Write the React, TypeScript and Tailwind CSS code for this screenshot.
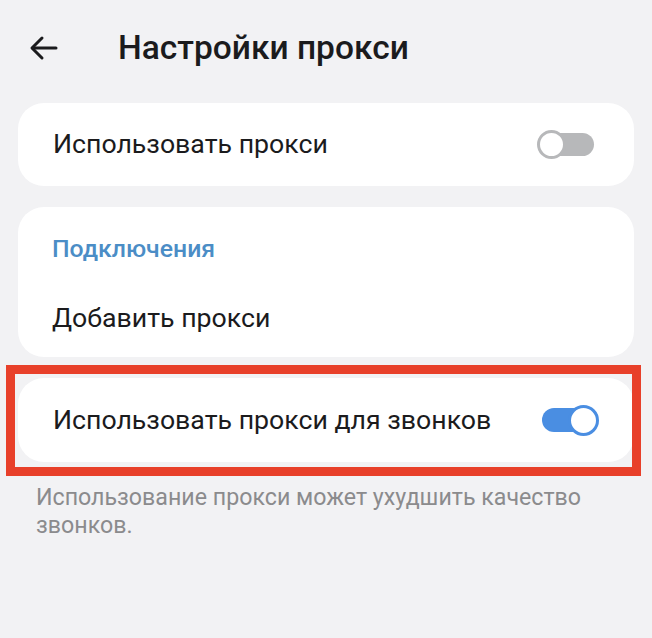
const font = { fontFamily: "Roboto, 'Noto Sans', sans-serif" };

function Toggle({ on }: { on: boolean }) {
  if (on) {
    return (
      <div className="relative w-[58px] h-[34px] flex items-center">
        <div className="ml-[1px] w-[50px] h-[24px] rounded-full bg-[#4a8ee2]" />
        <div className="absolute right-0 top-[2px] w-[31px] h-[31px] rounded-full bg-white border-[3px] border-[#4a8ee2]" />
      </div>
    );
  }
  return (
    <div className="relative w-[57px] h-[30px] flex items-center justify-end">
      <div className="w-[48px] h-[23px] rounded-full bg-[#b7b8ba]" />
      <div className="absolute left-0 top-0 w-[29px] h-[29px] rounded-full bg-white border-[3px] border-[#b7b8ba]" />
    </div>
  );
}

export default function App() {
  return (
    <div className="min-h-screen w-full bg-[#f2f2f4] text-[#1b1b1d]" style={font}>
      {/* Top bar */}
      <div className="h-[96px] flex items-center pl-[29px]">
        <svg width="30" height="26" viewBox="0 0 30 26" fill="none" stroke="#1b1b1d" strokeWidth="3" strokeLinecap="round" strokeLinejoin="round">
          <path d="M27 13H4" />
          <path d="M13 3L3 13l10 10" />
        </svg>
        <span className="ml-[59px] text-[33.5px] font-medium">Настройки прокси</span>
      </div>

      <div className="px-[18px] pt-[7px] flex flex-col">
        <div className="bg-white rounded-[26px] h-[83px] flex items-center justify-between pl-[35px] pr-[40px]">
          <span className="text-[26.7px]">Использовать прокси</span>
          <Toggle on={false} />
        </div>

        <div className="mt-[21px] bg-white rounded-[26px] h-[150px] flex flex-col pl-[34px]">
          <span className="mt-[23px] text-[24.8px] font-medium text-[#4b8dc6]">Подключения</span>
          <span className="mt-[31px] text-[26.7px]">Добавить прокси</span>
        </div>

        <div className="relative mt-[21px] bg-white rounded-[26px] h-[84px] flex items-center justify-between pl-[35px] pr-[35px]">
          <span className="text-[26.7px]">Использовать прокси для звонков</span>
          <Toggle on={true} />
          <div className="absolute -left-[12px] -top-[13px] -right-[7px] -bottom-[14px] border-[9px] border-[#e8402a] pointer-events-none" />
        </div>

        <p className="mt-[21px] pl-[18px] pr-[20px] text-[23.2px] leading-[28px] text-[#8b8b8d]">
          Использование прокси может ухудшить качество звонков.
        </p>
      </div>
    </div>
  );
}
